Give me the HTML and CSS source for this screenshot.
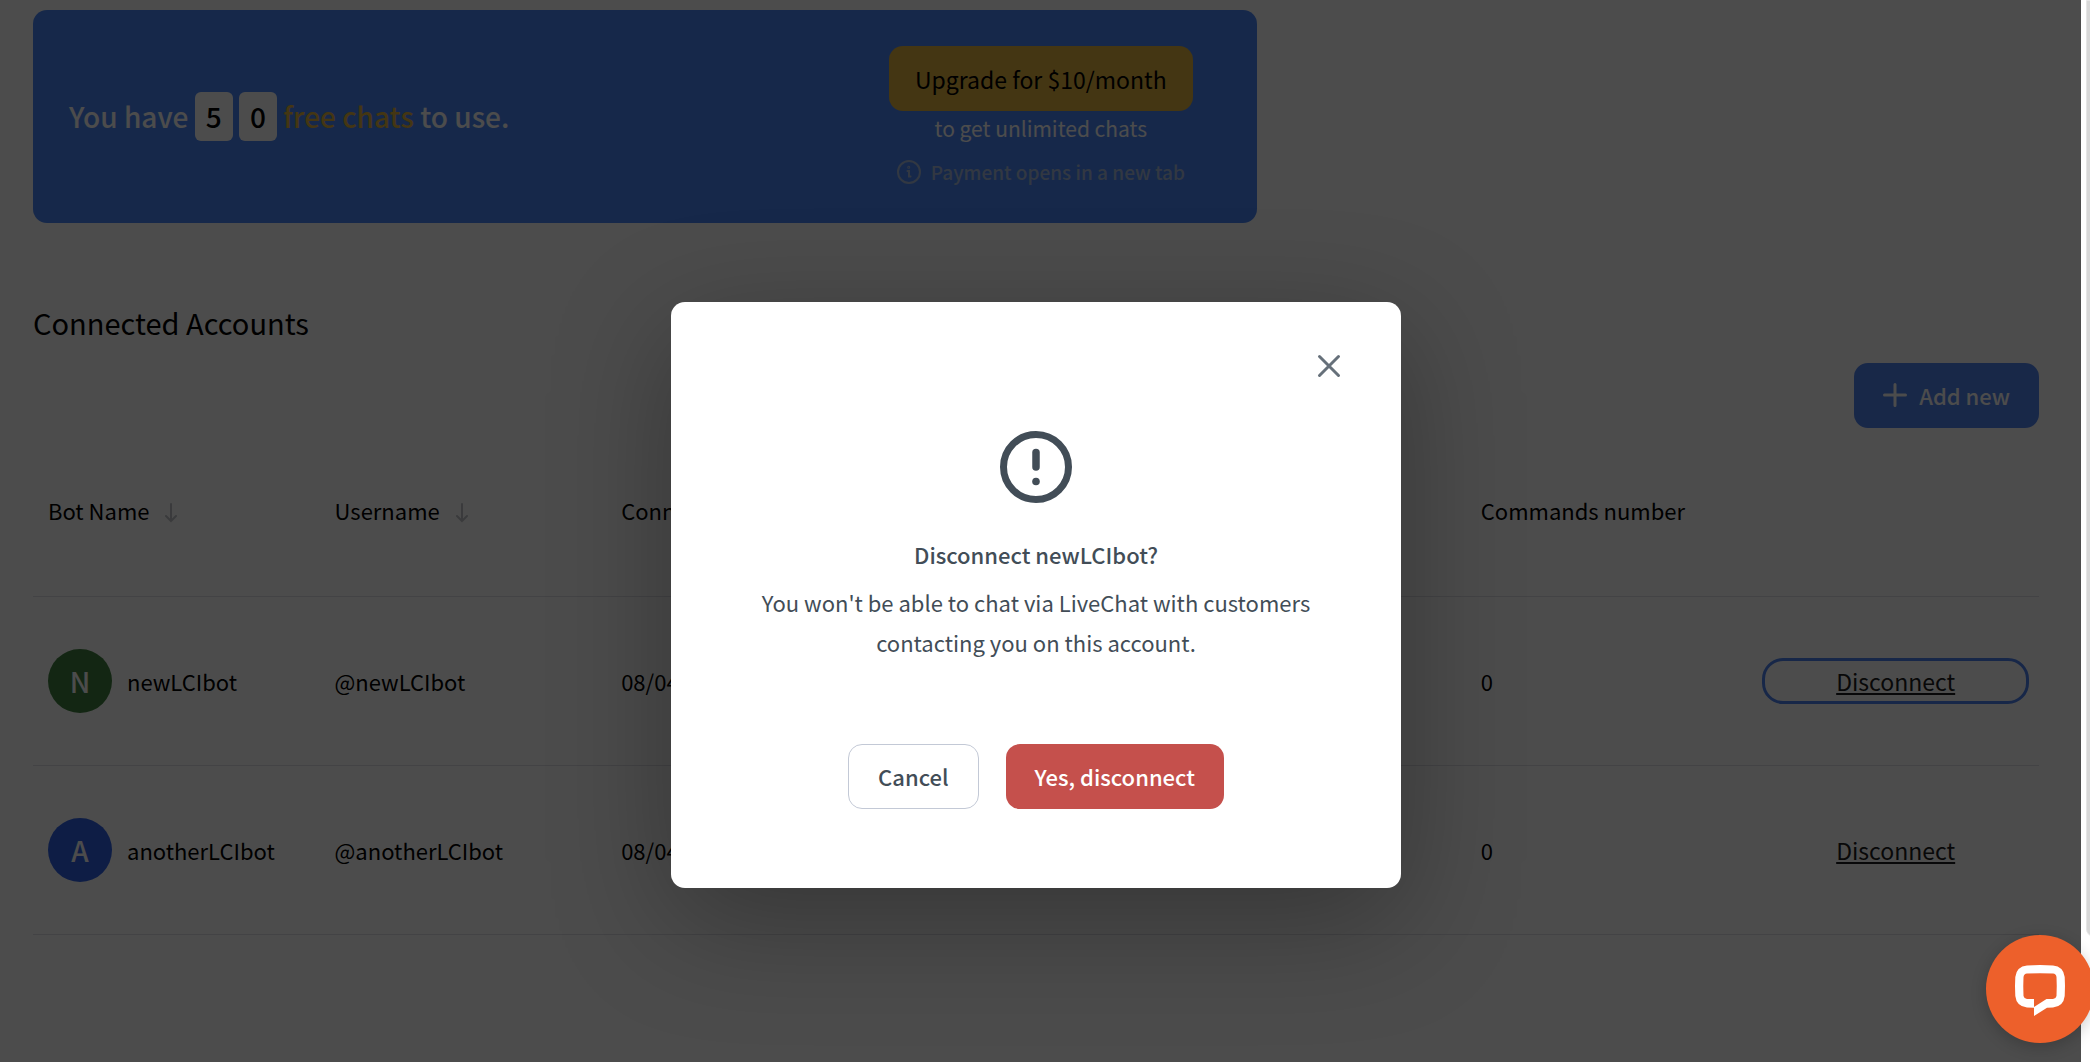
FILE: index.html
```html
<!DOCTYPE html>
<html lang="en">
<head>
  <meta charset="UTF-8">
  <meta name="viewport" content="width=device-width, initial-scale=1">
  <title>Connected Accounts</title>
  <link rel="stylesheet" href="styles.css">
</head>
<body>

  <div class="app">
    <main class="page">
      <section class="banner">
        <p class="banner-text">You have <span class="digit">5</span> <span class="digit">0</span> <span class="gold">free chats</span> to use.</p>
        <div class="upgrade">
          <button class="btn btn-gold" type="button">Upgrade for $10/month</button>
          <p class="upgrade-text">to get unlimited chats</p>
          <p class="upgrade-note">
            <svg width="24" height="24" viewBox="0 0 24 24" fill="none" stroke="currentColor" stroke-width="2" stroke-linecap="round">
              <circle cx="12" cy="12" r="11"/>
              <path d="M10.500 11h1.500v5.500h1.500"/>
              <circle cx="11.700" cy="7.300" r="0.500"/>
            </svg>
            Payment opens in a new tab
          </p>
        </div>
      </section>

      <h2>Connected Accounts</h2>

      <div class="toolbar">
        <button class="btn btn-blue" type="button">
          <svg width="24" height="24" viewBox="0 0 24 24" stroke="currentColor" stroke-width="3" stroke-linecap="round">
            <path d="M12 1.500v21M1.500 12h21"/>
          </svg>
          Add new
        </button>
      </div>

      <table class="accounts">
        <thead>
          <tr>
            <th>Bot Name <svg class="sort" width="14" height="20" viewBox="0 0 14 20"><path d="M7 1v17M2 13l5 5 5-5"/></svg></th>
            <th>Username <svg class="sort" width="14" height="20" viewBox="0 0 14 20"><path d="M7 1v17M2 13l5 5 5-5"/></svg></th>
            <th>Connected</th>
            <th></th>
            <th></th>
            <th>Commands number</th>
            <th></th>
          </tr>
        </thead>
        <tbody>
          <tr>
            <td><div class="bot"><span class="avatar green">N</span>newLCIbot</div></td>
            <td>@newLCIbot</td>
            <td>08/04</td>
            <td></td>
            <td></td>
            <td>0</td>
            <td><button class="link-btn active" type="button">Disconnect</button></td>
          </tr>
          <tr>
            <td><div class="bot"><span class="avatar blue">A</span>anotherLCIbot</div></td>
            <td>@anotherLCIbot</td>
            <td>08/04</td>
            <td></td>
            <td></td>
            <td>0</td>
            <td><button class="link-btn" type="button">Disconnect</button></td>
          </tr>
        </tbody>
      </table>
    </main>

    <div class="overlay">
      <div class="modal" role="dialog" aria-modal="true" aria-labelledby="modalTitle">
        <button class="close" type="button" aria-label="Close">
          <svg width="24" height="24" viewBox="0 0 24 24" stroke="currentColor" stroke-width="3" stroke-linecap="round">
            <path d="M2.500 2.500l19 19M21.500 2.500l-19 19"/>
          </svg>
        </button>
        <svg class="alert-icon" width="74" height="74" viewBox="0 0 74 74" fill="none" stroke="currentColor">
          <circle cx="37" cy="37" r="32.500" stroke-width="7"/>
          <path d="M37 22.500v14.500" stroke-width="7.500" stroke-linecap="round"/>
          <circle cx="37" cy="51.500" r="3.800" fill="currentColor" stroke="none"/>
        </svg>
        <h3 id="modalTitle">Disconnect newLCIbot?</h3>
        <p>You won't be able to chat via LiveChat with customers contacting you on this account.</p>
        <div class="modal-buttons">
          <button class="btn btn-plain" type="button">Cancel</button>
          <button class="btn btn-red" type="button">Yes, disconnect</button>
        </div>
      </div>
    </div>
  </div>

  <aside class="side"><div class="side-card"></div></aside>

  <button class="chat" type="button" aria-label="Open chat">
    <svg width="52" height="56" viewBox="0 0 52 56">
      <path fill="#fff" fill-rule="evenodd" d="M13 4.500Q26 3.500 39 4.500Q49.500 5.500 50.700 16Q51.300 25 50.700 35Q49.500 45.500 39 46.500L33 46.700L20 55V46.700L13 46.500Q2.500 45.500 1.300 35Q0.700 25 1.300 16Q2.500 5.500 13 4.500ZM13 12.500Q10 12.800 9.500 16Q9 25 9.500 35Q10 37.700 13 38H20V46L32.500 38H39Q42 37.700 42.500 35Q43 25 42.500 16Q42 12.800 39 12.500Q26 12 13 12.500Z"/>
    </svg>
  </button>

</body>
</html>
```

FILE: styles.css
```css
* {
  box-sizing: border-box;
}

body {
  margin: 0;
  font-family: "Noto Sans CJK SC", "Noto Sans", sans-serif;
  font-size: 22px;
  line-height: 40px;
  color: #000;
  background: #fff;
  display: flex;
  min-height: 100vh;
  overflow: hidden;
}

h2, h3, p {
  margin: 0;
}

button {
  font: inherit;
  color: inherit;
  cursor: pointer;
}

.app {
  flex: 1;
  display: grid;
}

.page,
.overlay {
  grid-area: 1 / 1;
}

.page {
  padding: 10px 42px 0 33px;
}

.banner {
  width: 61%;
  display: flex;
  align-items: center;
  justify-content: space-between;
  padding: 36px 64px 36px 36px;
  border-radius: 14px;
  background: #4c88f8;
  color: #fff;
}

.banner-text {
  font-size: 28px;
  font-weight: 500;
  line-height: 49px;
}

.digit {
  display: inline-block;
  width: 38px;
  border-radius: 6px;
  background: #fff;
  color: #000;
  text-align: center;
}

.gold {
  color: #e3b440;
}

.upgrade {
  text-align: center;
}

.upgrade-text {
  font-size: 21px;
  line-height: 34px;
}

.upgrade-note {
  display: flex;
  align-items: center;
  justify-content: center;
  gap: 10px;
  margin-top: 12px;
  color: #a8bcdc;
  font-size: 19px;
  font-weight: 500;
  line-height: 30px;
}

.btn {
  height: 65px;
  padding: 0 29px 2px;
  border: none;
  border-radius: 14px;
  font-weight: 500;
}

.btn-gold {
  padding: 0 26px;
  background: #e3b440;
  color: #000;
  font-size: 23px;
  font-weight: 400;
}

.btn-blue {
  display: flex;
  align-items: center;
  gap: 12px;
  background: #5385f0;
  color: #fff;
}

h2 {
  margin-top: 79px;
  font-size: 29px;
  font-weight: 400;
}

.toolbar {
  display: flex;
  justify-content: flex-end;
  margin-top: 21px;
}

.accounts {
  width: 100%;
  table-layout: fixed;
  border-collapse: collapse;
}

.accounts th,
.accounts td {
  height: 169px;
  padding: 0 15px;
  border-bottom: 1px solid #dfe2e6;
  font-weight: 400;
  text-align: left;
  white-space: nowrap;
}

.accounts th {
  height: 168px;
  padding-bottom: 3px;
}

.sort {
  margin-left: 10px;
  vertical-align: -3px;
  fill: none;
  stroke: #c2c4c8;
  stroke-width: 2;
  stroke-linecap: round;
}

.bot {
  display: flex;
  align-items: center;
  gap: 15px;
}

.avatar {
  width: 64px;
  height: 64px;
  border-radius: 50%;
  color: #fff;
  font-size: 28px;
  font-weight: 500;
  line-height: 64px;
  text-align: center;
}

.avatar.green {
  background: #408040;
}

.avatar.blue {
  background: #2f63e8;
}

.link-btn {
  display: block;
  width: 100%;
  padding: 0;
  border: none;
  border-radius: 16px;
  background: none;
  color: #1b1b20;
  font-size: 23px;
  line-height: 36px;
  text-decoration: underline;
}

.link-btn.active {
  outline: 3px solid #4f83f0;
  outline-offset: 2px;
}

/* the dialog sits over the dimmed page */
.overlay {
  z-index: 1;
  display: flex;
  align-items: flex-start;
  justify-content: center;
  padding: 302px 9px 0 0;
  background: rgba(0, 0, 0, 0.7);
  overflow: hidden;
}

.modal {
  width: 730px;
  display: flex;
  flex-direction: column;
  align-items: center;
  padding: 48px 56px 79px;
  border-radius: 14px;
  background: #fff;
  color: #424d57;
  text-align: center;
  box-shadow: 0 32px 120px rgba(0, 0, 0, 0.3);
}

.close {
  align-self: flex-end;
  height: 32px;
  padding: 4px;
  border: none;
  background: none;
  color: #66707a;
  line-height: 0;
}

.alert-icon {
  margin: 48px 0 30px;
}

h3 {
  font-size: 22px;
  font-weight: 500;
}

.modal p {
  max-width: 580px;
  margin-top: 8px;
}

.modal-buttons {
  display: flex;
  gap: 27px;
  margin-top: 82px;
}

.btn-plain {
  border: 1px solid #c3c9d6;
  background: #fff;
}

.btn-red {
  background: #c5504c;
  color: #fff;
}

.side {
  width: 9px;
  padding-left: 5px;
}

.side-card {
  width: 40px;
  height: 937px;
  border: 1px solid #e6e6e6;
  border-radius: 0 0 0 8px;
  background: #d8d8d8;
}

.chat {
  position: fixed;
  z-index: 2;
  right: -4px;
  bottom: 19px;
  width: 108px;
  height: 108px;
  padding: 0;
  border: none;
  border-radius: 50%;
  background: #ed602b;
  line-height: 0;
  box-shadow: 0 4px 16px rgba(0, 0, 0, 0.2);
}
```
